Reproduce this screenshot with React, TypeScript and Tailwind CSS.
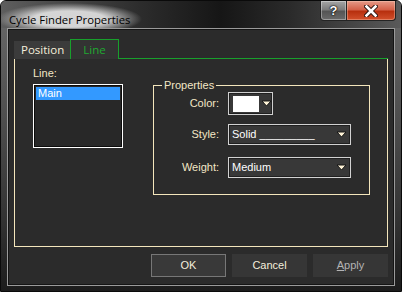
const ui = "font-['Liberation_Sans',Arial,sans-serif]";

function Arrow() {
  return (
    <svg width="11" height="7" viewBox="0 0 11 7" className="shrink-0">
      <path d="M1 1h9L5.5 6z" fill="#fff4d8" stroke="#141414" strokeWidth="1" strokeLinejoin="round" />
    </svg>
  );
}

function Dropdown({ value }: { value: string }) {
  return (
    <div className="flex h-[21px] w-[123px] items-center justify-between border border-[#d2d2d2] bg-[#383838] pl-[3px] pr-[3px] shadow-[inset_0_0_0_1px_#202020]">
      <span className="text-[11px] leading-none text-white">{value}</span>
      <Arrow />
    </div>
  );
}

export default function App() {
  return (
    <div className={`flex h-[292px] w-[402px] flex-col overflow-hidden rounded-t-[6px] border border-[#0a0a0a] bg-[linear-gradient(180deg,#6a6a6a_0%,#525252_35%,#333_75%,#1c1c1c_100%)] ${ui}`}>
      {/* title bar */}
      <div className="flex h-[27px] shrink-0 items-start justify-between bg-[linear-gradient(90deg,#5e5e5e_0%,#2c2c2c_35%,#161616_55%,#2a2a2a_72%,#5a5a5a_100%)]">
        <div className="ml-[-4px] mt-[2px] rounded-full bg-[radial-gradient(closest-side,rgba(225,225,225,0.92)_50%,rgba(190,190,190,0.45)_80%,rgba(190,190,190,0)_100%)] px-[12px] py-[4px]">
          <span className="font-['Open_Sans',sans-serif] text-[11.3px] leading-[16px] text-black">Cycle Finder Properties</span>
        </div>
        <div className="mr-[5px] flex">
          <div className="flex h-[20px] w-[27px] items-center justify-center rounded-bl-[4px] border border-t-0 border-[#242424] bg-[linear-gradient(180deg,#a6a6a6_0%,#7c7c7c_45%,#555_55%,#6a6a6a_100%)] shadow-[inset_0_0_0_1px_rgba(255,255,255,0.35)]">
            <span className="text-[13px] font-bold leading-none text-white [text-shadow:0_0_1px_#000,0_0_1px_#000,0_0_2px_#000]">?</span>
          </div>
          <div className="flex h-[20px] w-[49px] items-center justify-center rounded-br-[4px] border border-l-0 border-t-0 border-[#242424] bg-[linear-gradient(180deg,#e59a88_0%,#d4624a_45%,#b8300f_55%,#d2502c_100%)] shadow-[inset_0_0_0_1px_rgba(255,220,200,0.35)]">
            <svg width="14" height="12" viewBox="0 0 14 12">
              <path d="M2.5 1.5l9 9M11.5 1.5l-9 9" stroke="#2a1410" strokeWidth="4.5" strokeLinecap="square" />
              <path d="M2.5 1.5l9 9M11.5 1.5l-9 9" stroke="#fff" strokeWidth="2.6" strokeLinecap="square" />
            </svg>
          </div>
        </div>
      </div>

      {/* client area */}
      <div className="mx-[6px] flex h-[258px] flex-col border border-[#9a9a9a] bg-[#2b2b2b] px-[6px] pt-[10px] shadow-[inset_0_0_0_1px_#141414]">
        {/* tabs */}
        <div className="flex h-[20px] items-end">
          <div className="flex h-[18px] w-[56px] items-center bg-[#3b3b3b] pl-[7px] font-['Open_Sans',sans-serif] text-[11.5px] text-[#f6efdc]">Position</div>
          <div className="flex h-[20px] w-[49px] items-center justify-center border border-b-0 border-[#18a02c] bg-[#333] font-['Open_Sans',sans-serif] text-[11.5px] text-[#1faa30]">Line</div>
          <div className="h-[1px] flex-1 bg-[#18a02c]" />
        </div>

        {/* panel */}
        <div className="flex h-[188px] border-x border-b border-[#f4e6bc]">
          <div className="flex flex-col pl-[18px] pt-[8px]">
            <span className="text-[11px] leading-[13px] text-[#f3e7c6]">Line:</span>
            <div className="mt-[4px] h-[64px] w-[90px] border border-white bg-[#282828] shadow-[inset_0_0_0_1px_#0c0c0c] p-[2px]">
              <div className="flex h-[13px] items-center bg-[#3399ff] pl-[2px] text-[11px] text-white">Main</div>
            </div>
          </div>

          <fieldset className="ml-[30px] mt-[19px] h-[117px] w-[217px] border border-[#f4e6bc] pb-[14px]">
            <legend className="ml-[8px] px-[2px] text-[11px] leading-[14px] text-[#f3e7c6]">Properties</legend>
            <div className="flex items-center">
              <span className="w-[65px] text-right text-[11px] text-[#f3e7c6]">Color:</span>
              <div className="ml-[9px] flex h-[23px] w-[45px] items-center gap-[2px] border border-[#cfcfcf] bg-[#383838] pl-[4px] shadow-[inset_0_0_0_1px_#202020]">
                <div className="h-[16px] w-[26px] bg-white" />
                <Arrow />
              </div>
            </div>
            <div className="mt-[9px] flex items-center">
              <span className="w-[65px] text-right text-[11px] text-[#f3e7c6]">Style:</span>
              <div className="ml-[9px]"><Dropdown value="Solid _________" /></div>
            </div>
            <div className="mt-[12px] flex items-center">
              <span className="w-[65px] text-right text-[11px] text-[#f3e7c6]">Weight:</span>
              <div className="ml-[9px]"><Dropdown value="Medium" /></div>
            </div>
          </fieldset>
        </div>

        {/* buttons */}
        <div className="mt-[7px] flex justify-end gap-[6px]">
          <button className="h-[23px] w-[75px] border border-[#777] bg-[#393939] text-[11px] text-[#f4eedc]">OK</button>
          <button className="h-[23px] w-[75px] bg-[#363636] text-[11px] text-[#f4eedc]">Cancel</button>
          <button className="h-[23px] w-[75px] bg-[#363636] text-[11px] text-[#b4b4b4]"><span className="underline">A</span>pply</button>
        </div>
      </div>
    </div>
  );
}
